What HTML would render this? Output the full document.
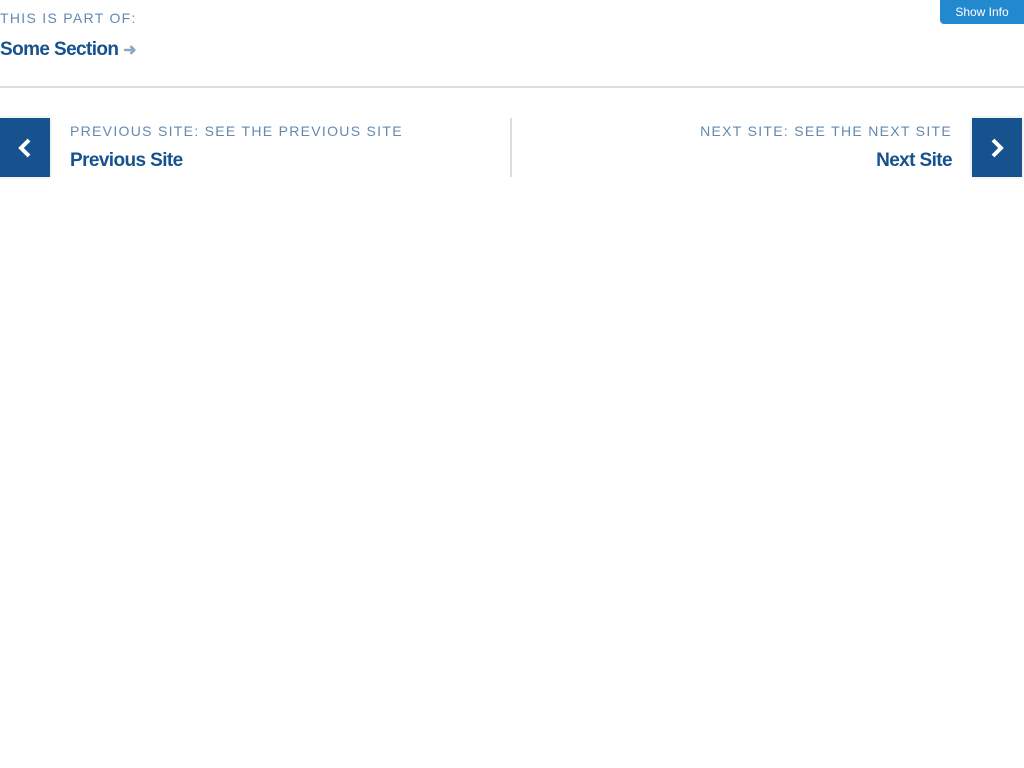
<!DOCTYPE html>
<html><head><meta charset="utf-8"><style>
body{margin:0;width:1024px;height:768px;background:#fff;font-family:"Liberation Sans",sans-serif;position:relative;overflow:hidden}
.lbl{position:absolute;font-size:14px;letter-spacing:1.3px;color:#6389b0;text-transform:uppercase}
.ttl{position:absolute;font-size:19px;font-weight:bold;letter-spacing:-0.6px;color:#16528e}
.box{position:absolute;top:118px;width:50px;height:59px;background:#16528e;box-shadow:0 0 4px rgba(0,0,0,.15)}
.box svg{position:absolute;left:16px;top:20px}
</style></head><body>
<div style="position:absolute;left:940px;top:0;width:84px;height:24px;background:#2389cf;border-bottom-left-radius:4px;color:#fff;font-size:12px;line-height:24px;text-align:center">Show Info</div>
<div class="lbl" style="left:0;top:10px">This is part of:</div>
<div class="ttl" style="left:0;top:39px">Some Section <span style="color:#8aa8c8;font-size:16px">&#10140;</span></div>
<div style="position:absolute;left:0;top:86px;width:1024px;height:2px;background:#ddd"></div>
<div class="box" style="left:0"><svg width="18" height="20" viewBox="0 0 18 20"><path d="M13 2 L5 10 L13 18" stroke="#fff" stroke-width="4" fill="none"/></svg></div>
<div class="lbl" style="left:70px;top:123px">Previous Site: See the previous site</div>
<div class="ttl" style="left:70px;top:150px">Previous Site</div>
<div style="position:absolute;left:510px;top:118px;width:2px;height:59px;background:#ddd"></div>
<div class="lbl" style="right:72px;top:123px">Next Site: See the next site</div>
<div class="ttl" style="right:72px;top:150px">Next Site</div>
<div class="box" style="left:972px"><svg width="18" height="20" viewBox="0 0 18 20"><path d="M5 2 L13 10 L5 18" stroke="#fff" stroke-width="4" fill="none"/></svg></div>
</body></html>
